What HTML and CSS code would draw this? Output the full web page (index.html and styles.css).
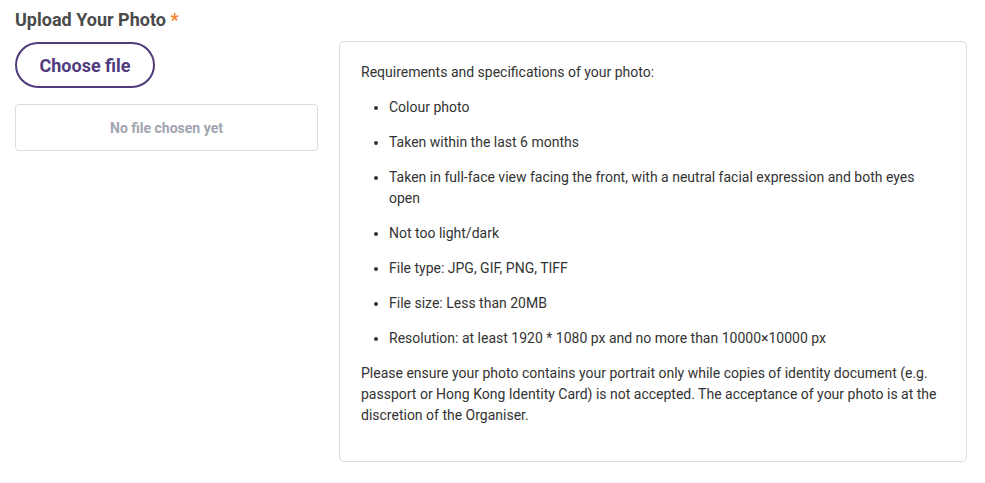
FILE: index.html
```html
<!DOCTYPE html>
<html>
<head>
<meta charset="utf-8">
<link rel="stylesheet" href="styles.css">
</head>
<body>
<div class="field">
  <div class="label">Upload Your Photo <span class="req">*</span></div>
  <div class="row">
    <div class="left">
      <button class="choose">Choose file</button>
      <div class="filebox">No file chosen yet</div>
    </div>
    <div class="panel">
      <p>Requirements and specifications of your photo:</p>
      <ul>
        <li>Colour photo</li>
        <li>Taken within the last 6 months</li>
        <li>Taken in full-face view facing the front, with a neutral facial expression and both eyes open</li>
        <li>Not too light/dark</li>
        <li>File type: JPG, GIF, PNG, TIFF</li>
        <li>File size: Less than 20MB</li>
        <li>Resolution: at least 1920 * 1080 px and no more than 10000×10000 px</li>
      </ul>
      <p>Please ensure your photo contains your portrait only while copies of identity document (e.g. passport or Hong Kong Identity Card) is not accepted. The acceptance of your photo is at the discretion of the Organiser.</p>
    </div>
  </div>
</div>
</body>
</html>
```
FILE: styles.css
```css
html, body {
  margin: 0;
  padding: 0;
  background: #ffffff;
  font-family: Roboto, "Liberation Sans", sans-serif;
}
.field {
  padding: 8px 18px 0 15px;
}
.label {
  font-size: 18px;
  font-weight: 700;
  color: #4a4a4a;
  line-height: 24px;
  margin-bottom: 9px;
}
.req {
  color: #f5832a;
}
.row {
  display: flex;
  align-items: flex-start;
  gap: 21px;
}
.left {
  width: 303px;
  flex: none;
  padding-top: 1px;
}
.choose {
  display: block;
  box-sizing: border-box;
  width: 140px;
  height: 46px;
  border: 2px solid #4f3b7d;
  border-radius: 23px;
  background: #fff;
  color: #4f3b7d;
  font-family: Roboto, "Liberation Sans", sans-serif;
  font-size: 18px;
  font-weight: 700;
  padding: 0;
  margin-bottom: 16px;
}
.filebox {
  box-sizing: border-box;
  height: 47px;
  border: 1px solid #dcdcdc;
  border-radius: 4px;
  display: flex;
  align-items: center;
  justify-content: center;
  font-size: 14px;
  font-weight: 700;
  color: #a0a5af;
}
.panel {
  box-sizing: border-box;
  width: 628px;
  flex: none;
  border: 1px solid #dcdcdc;
  border-radius: 5px;
  padding: 20px 20px 21px 21px;
  font-size: 14px;
  line-height: 21px;
  color: #333333;
}
.panel p {
  margin: 0 0 14px 0;
}
.panel ul {
  margin: 0 0 14px 0;
  padding-left: 28px;
}
.panel li {
  margin-bottom: 14px;
}
.panel li:last-child {
  margin-bottom: 0;
}
```
